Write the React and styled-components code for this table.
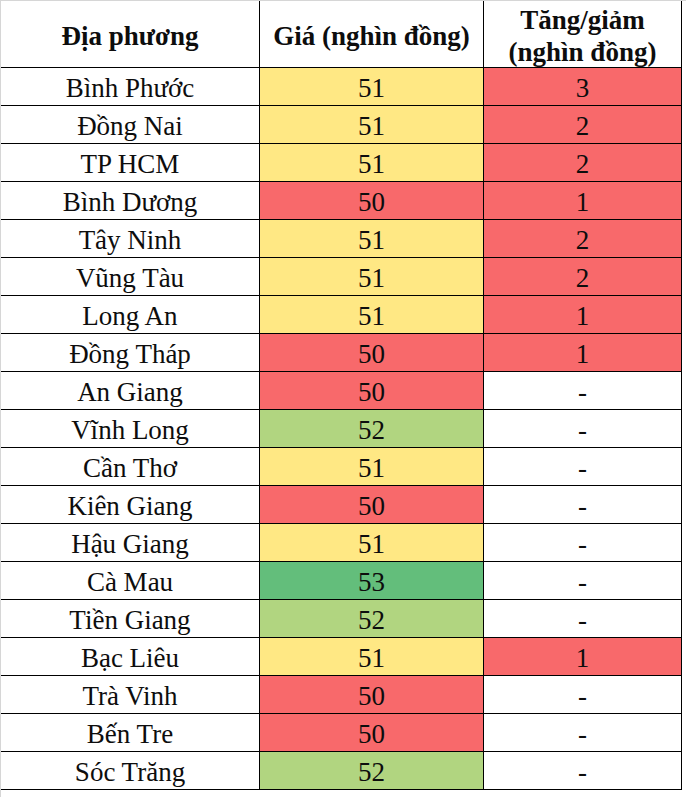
import React from "react";
import styled, { createGlobalStyle } from "styled-components";

const GlobalStyle = createGlobalStyle`
  html, body {
    margin: 0;
    padding: 0;
    background: #ffffff;
  }
`;

const colors = {
  red: "#f8696b",
  yellow: "#ffe884",
  lime: "#b1d580",
  green: "#63be7b",
};

const Frame = styled.div`
  width: 686px;
  height: 797px;
  box-sizing: border-box;
  border-top: 1px solid #d6d6d6;
  border-left: 1px solid #d6d6d6;
`;

const Table = styled.div`
  display: grid;
  grid-template-columns: 259px 224px 198px;
  grid-template-rows: 67px repeat(19, 38px);
  width: 681px;
  font-family: "Liberation Serif", "Times New Roman", serif;
  color: #0d0d0d;
`;

const Cell = styled.div`
  box-sizing: border-box;
  display: flex;
  align-items: center;
  justify-content: center;
  text-align: center;
  border-bottom: 1px solid #000000;
  border-right: 1px solid #000000;
  background: ${(props) => (props.fill ? colors[props.fill] : "#ffffff")};
  font-size: 27px;
  line-height: 1;
  padding-top: 4px;
`;

const HeadCell = styled(Cell)`
  font-weight: bold;
  line-height: 32px;
  padding-top: 3px;
`;

const rows = [
  ["Bình Phước", "51", "yellow", "3"],
  ["Đồng Nai", "51", "yellow", "2"],
  ["TP HCM", "51", "yellow", "2"],
  ["Bình Dương", "50", "red", "1"],
  ["Tây Ninh", "51", "yellow", "2"],
  ["Vũng Tàu", "51", "yellow", "2"],
  ["Long An", "51", "yellow", "1"],
  ["Đồng Tháp", "50", "red", "1"],
  ["An Giang", "50", "red", "-"],
  ["Vĩnh Long", "52", "lime", "-"],
  ["Cần Thơ", "51", "yellow", "-"],
  ["Kiên Giang", "50", "red", "-"],
  ["Hậu Giang", "51", "yellow", "-"],
  ["Cà Mau", "53", "green", "-"],
  ["Tiền Giang", "52", "lime", "-"],
  ["Bạc Liêu", "51", "yellow", "1"],
  ["Trà Vinh", "50", "red", "-"],
  ["Bến Tre", "50", "red", "-"],
  ["Sóc Trăng", "52", "lime", "-"],
];

export default function App() {
  return (
    <>
      <GlobalStyle />
      <Frame>
        <Table>
          <HeadCell>Địa phương</HeadCell>
          <HeadCell>Giá (nghìn đồng)</HeadCell>
          <HeadCell>
            Tăng/giảm
            <br />
            (nghìn đồng)
          </HeadCell>
          {rows.map(([place, price, fill, change]) => (
            <React.Fragment key={place}>
              <Cell>{place}</Cell>
              <Cell fill={fill}>{price}</Cell>
              <Cell fill={change === "-" ? null : "red"}>{change}</Cell>
            </React.Fragment>
          ))}
        </Table>
      </Frame>
    </>
  );
}
